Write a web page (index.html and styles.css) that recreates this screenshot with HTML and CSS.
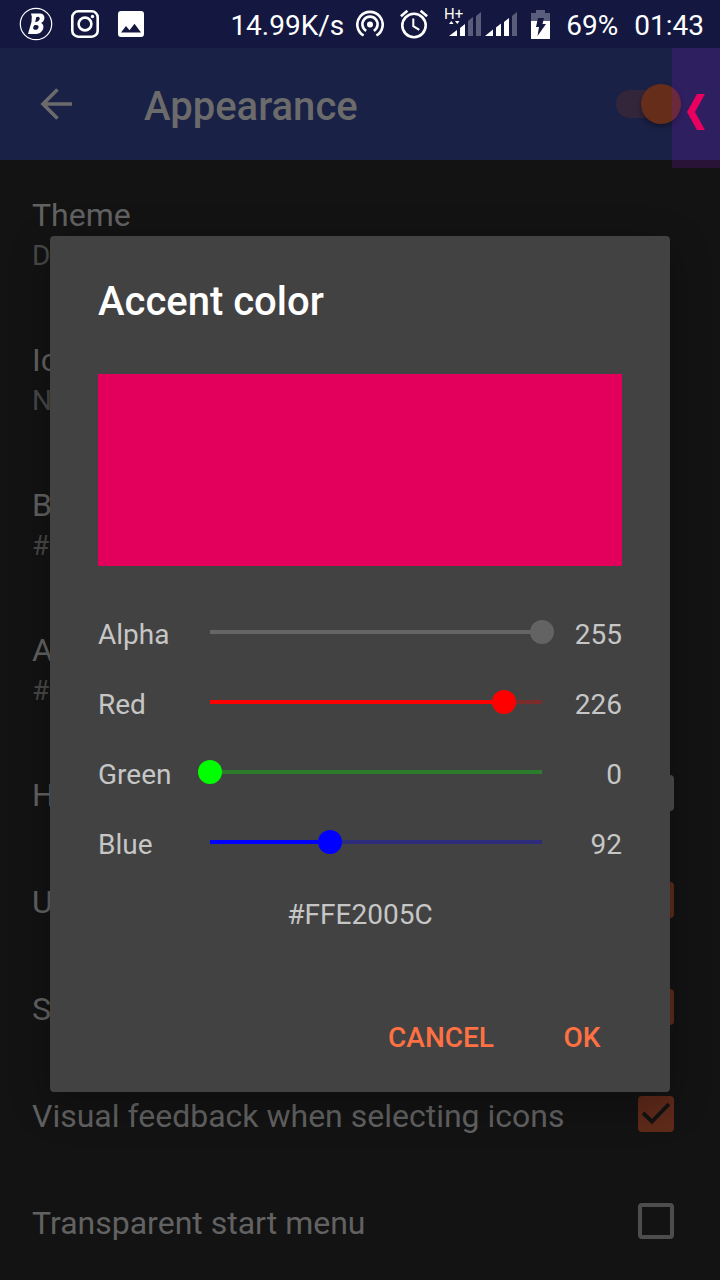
FILE: index.html
```html
<!DOCTYPE html>
<html lang="en">
<head>
<meta charset="utf-8">
<meta name="viewport" content="width=device-width, initial-scale=1">
<title>Appearance</title>
<link rel="stylesheet" href="styles.css">
</head>
<body>
<div class="app">
  <header class="status">
    <div class="status-left">
      <svg width="34" height="34" viewBox="0 0 34 34" aria-hidden="true">
        <circle cx="17" cy="17" r="15.7" fill="none" stroke="#fff" stroke-width="1.2"/>
        <path fill="#fff" fill-rule="evenodd" d="M12 6.500h8c4 0 6 2 5.300 5.500-.4 2-1.600 3.300-3.300 4 2 .8 2.800 2.600 2.300 5-.8 3.900-3.800 6-8 6H9l.8-3 2.700-9 .3-5.500zm5.200 3.700c2-1.200 4-.4 3.500 1.900-.4 1.700-2.200 3-4.500 3.200zm-1.900 8c2.600-.7 4.600 0 4.300 2-.4 2-2.600 3.400-4.600 2.200-1.300-.8-1-2.600.3-4.200z"/>
      </svg>
      <svg width="28" height="28" viewBox="0 0 28 28" fill="none" stroke="#fff" aria-hidden="true">
        <rect x="1.300" y="1.300" width="25.400" height="25.400" rx="6" stroke-width="2.600"/>
        <circle cx="14" cy="14" r="6.400" stroke-width="2.600"/>
        <circle cx="21.500" cy="6.500" r="1.700" fill="#fff" stroke="none"/>
      </svg>
      <svg width="28" height="28" viewBox="-1 -1 28 28" aria-hidden="true">
        <path fill="#fff" fill-rule="evenodd" d="M3 0h20a3 3 0 0 1 3 3v20a3 3 0 0 1-3 3H3a3 3 0 0 1-3-3V3a3 3 0 0 1 3-3zm0 21.500h20l-6.500-8.700-5 6.500L8 15z"/>
      </svg>
    </div>
    <div class="status-right">
      <span class="speed">14.99K/s</span>
      <svg class="hotspot" width="28" height="28" viewBox="0 0 28 28" fill="none" stroke="#fff" stroke-width="2.600" aria-hidden="true">
        <path d="M7.600 25.500a12.700 12.700 0 1 1 12.800 0"/>
        <path d="M10.200 20.800a7.600 7.600 0 1 1 7.600 0"/>
        <circle cx="14" cy="14.500" r="3" fill="#fff" stroke="none"/>
      </svg>
      <svg class="alarm" width="28" height="30" viewBox="0 0 28 30" fill="none" stroke="#fff" stroke-width="2.600" aria-hidden="true">
        <circle cx="14" cy="16.500" r="11.700"/>
        <path d="M.9 7.300 7.400 1.800M27.100 7.300 20.600 1.800"/>
        <path d="M13.300 9.500v7.700l6 3.700" stroke-width="2"/>
      </svg>
      <svg class="signal" width="73" height="32" viewBox="0 0 73 32" fill="#fff" aria-hidden="true">
        <text class="network" x="-1" y="14">H+</text>
        <path d="M4 19l2.300-3 2.200 3zM10 16h4.500l-2.200 3zM4 31l8-6v6zM15 23l5-4v12h-5zM40 31l8-6.500V31zM51 22.500l5-4V31h-5zM59 17l5-4v18h-5z"/>
        <path opacity=".3" d="M23 16l5-4v19h-5zM31 11l5-4v24h-5zM67 11l5-4v24h-5z"/>
      </svg>
      <svg class="battery" width="19" height="29" viewBox="0 0 19 29" aria-hidden="true">
        <path fill="#5b5d7c" d="M5 0h9v3h5v9H0V3h5z"/>
        <path fill="#fff" d="M0 11h19v18H0z"/>
        <path fill="#141840" d="M7 8h6l-1.500 6H15L6.500 26l1.500-9H5z"/>
      </svg>
      <span class="percent">69%</span>
      <time>01:43</time>
    </div>
  </header>

  <div class="toolbar">
    <button class="back" type="button" aria-label="Back">
      <svg width="32" height="32" viewBox="0 0 32 32" fill="none" stroke="#6b6b6b" stroke-width="3.600"><path d="M32 16H3M17.500 1.500 3 16l14.500 14.500"/></svg>
    </button>
    <h1>Appearance</h1>
    <input class="switch" type="checkbox" role="switch" aria-label="Enable appearance" checked>
  </div>

  <button class="side-tab" type="button" aria-label="Open panel">
    <svg width="18" height="36" viewBox="0 0 18 36"><path fill="#e9005f" d="M10 0h8L8 18l10 18h-8L0 18z"/></svg>
  </button>

  <main class="settings">
    <div class="pref"><span class="name">Theme</span><span class="summary">D</span></div>
    <div class="pref"><span class="name">Ic</span><span class="summary">N</span></div>
    <div class="pref"><span class="name">B</span><span class="summary">#</span></div>
    <div class="pref"><span class="name">A</span><span class="summary">#</span></div>
    <label class="pref-check"><span class="name">H</span><input class="box" type="checkbox"></label>
    <label class="pref-check"><span class="name">U</span><input class="box" type="checkbox" checked></label>
    <label class="pref-check"><span class="name">S</span><input class="box" type="checkbox" checked></label>
    <label class="pref-check"><span class="name">Visual feedback when selecting icons</span>
      <span class="tick"><input class="box" type="checkbox" checked><svg viewBox="0 0 36 36" aria-hidden="true"><path d="M5 17l9 8.500L31 8" fill="none" stroke="#131313" stroke-width="3.800"/></svg></span>
    </label>
    <label class="pref-check"><span class="name">Transparent start menu</span><input class="box" type="checkbox"></label>
  </main>

  <div class="scrim">
    <section class="dialog" role="dialog" aria-labelledby="dialog-title">
      <h2 id="dialog-title">Accent color</h2>
      <div class="swatch"></div>
      <div class="channels">
        <div class="channel"><label for="alpha">Alpha</label><input id="alpha" class="range alpha" type="range" min="0" max="255" value="255" disabled style="--value:255"><output for="alpha">255</output></div>
        <div class="channel"><label for="red">Red</label><input id="red" class="range red" type="range" min="0" max="255" value="226" style="--value:226"><output for="red">226</output></div>
        <div class="channel"><label for="green">Green</label><input id="green" class="range green" type="range" min="0" max="255" value="0" style="--value:0"><output for="green">0</output></div>
        <div class="channel"><label for="blue">Blue</label><input id="blue" class="range blue" type="range" min="0" max="255" value="92" style="--value:92"><output for="blue">92</output></div>
      </div>
      <p class="hex">#FFE2005C</p>
      <div class="actions">
        <button type="button">CANCEL</button>
        <button type="button">OK</button>
      </div>
    </section>
  </div>
</div>
</body>
</html>
```
FILE: styles.css
```css
* { box-sizing: border-box; }

body {
  margin: 0;
  background: #131313;
  color: #fff;
  font-family: Roboto, "Noto Sans", sans-serif;
}

button {
  border: 0;
  padding: 0;
  background: none;
  font-family: inherit;
}

svg { display: block; }

.app {
  position: relative;
  min-height: 100vh;
}

/* Status bar */
.status {
  display: flex;
  justify-content: space-between;
  height: 48px;
  padding: 0 16px 0 19px;
  background: #141840;
  font-size: 28px;
  line-height: 44px;
}

.status span,
.status time { padding-top: 4px; }

.status-left,
.status-right {
  display: flex;
  align-items: center;
}

.status-left { gap: 18px; }
.speed { margin-right: 12px; }
.hotspot { margin-right: 16px; }
.alarm { margin-right: 17px; }
.signal { margin-right: 13px; }
.battery { margin-right: 16px; }
.percent { margin-right: 16px; }

.signal { align-self: flex-start; margin-top: 5px; }
.network { font-size: 15px; }

/* Toolbar */
.toolbar {
  display: flex;
  align-items: center;
  height: 112px;
  padding: 0 39px 0 40px;
  background: #1a2146;
}

.back { width: 104px; }

h1 {
  flex: 1;
  margin: 0;
  padding-top: 6px;
  color: #6b6b6b;
  font-size: 40px;
  font-weight: 500;
  line-height: 48px;
}

.switch {
  appearance: none;
  display: flex;
  align-items: center;
  justify-content: flex-end;
  width: 65px;
  height: 28px;
  margin: 0;
  border-radius: 14px;
  background: #33253a;
}

.switch::before {
  content: "";
  width: 40px;
  height: 40px;
  border-radius: 50%;
  background: #662d1b;
  box-shadow: 0 3px 5px rgba(0, 0, 0, .35);
}

.side-tab {
  position: absolute;
  top: 48px;
  right: 0;
  display: flex;
  align-items: center;
  justify-content: center;
  width: 48px;
  height: 120px;
  padding-top: 8px;
  background: rgba(130, 25, 205, .2);
}

/* Preference list */
.pref {
  height: 145px;
  padding: 35px 32px 0;
}

.pref span {
  display: block;
  line-height: 40px;
}

.name {
  color: #626262;
  font-size: 32px;
}

.pref .summary {
  color: #484848;
  font-size: 28px;
  line-height: 42px;
}

.pref-check {
  display: flex;
  align-items: center;
  justify-content: space-between;
  height: 107px;
  padding: 0 46px 2px 32px;
}

.pref-check .name { padding-top: 4px; }

.box {
  appearance: none;
  display: block;
  width: 36px;
  height: 36px;
  margin: 0;
  border: 4px solid #4d4d4d;
  border-radius: 4px;
}

.box:checked {
  border-color: #5f2a1a;
  background: #5f2a1a;
}

.tick { position: relative; }

.tick svg {
  position: absolute;
  inset: 0;
}

/* Color dialog */
.scrim {
  position: absolute;
  inset: 0;
  display: flex;
  align-items: center;
  padding: 48px 50px 0;
}

.dialog {
  flex: 1;
  padding: 42px 48px 19px;
  border-radius: 4px;
  background: #424242;
  box-shadow: 0 12px 40px rgba(0, 0, 0, .3);
}

h2 {
  margin: 0 0 48px;
  font-size: 40px;
  font-weight: 500;
  line-height: 48px;
}

.swatch {
  height: 192px;
  margin-bottom: 31px;
  background: #e2005c;
}

.channel {
  display: grid;
  grid-template-columns: 100px 1fr 68px;
  align-items: center;
  height: 70px;
  color: #c6c6c6;
  font-size: 28px;
}

.channel output { text-align: right; }

.channel label,
.channel output { line-height: 32px; padding-top: 6px; }

.range {
  --reach: calc((100% - 24px) * var(--value) / 255);
  appearance: none;
  width: 100%;
  height: 24px;
  margin: 0;
  background:
    linear-gradient(var(--color), var(--color)) 12px center / var(--reach) 4px no-repeat,
    linear-gradient(var(--rest), var(--rest)) 12px center / calc(100% - 24px) 4px no-repeat;
}

.range::-webkit-slider-thumb {
  appearance: none;
  width: 24px;
  height: 24px;
  border-radius: 50%;
  background: var(--color);
}

.alpha { --color: #666; --rest: #666; }
.alpha::-webkit-slider-thumb { background: #636363; }
.red { --color: #f00; --rest: #7b2d2d; }
.green { --color: #0f0; --rest: #2d7b2d; }
.blue { --color: #00f; --rest: #2d2d7b; }

.hex {
  margin: 18px 0 66px;
  color: #c6c6c6;
  font-size: 28px;
  line-height: 40px;
  text-align: center;
}

.actions {
  display: flex;
  justify-content: flex-end;
  gap: 8px;
  margin-right: -24px;
}

.actions button {
  min-width: 128px;
  height: 72px;
  padding: 0 16px;
  color: #ff7043;
  font-size: 28px;
  font-weight: 500;
}
```
